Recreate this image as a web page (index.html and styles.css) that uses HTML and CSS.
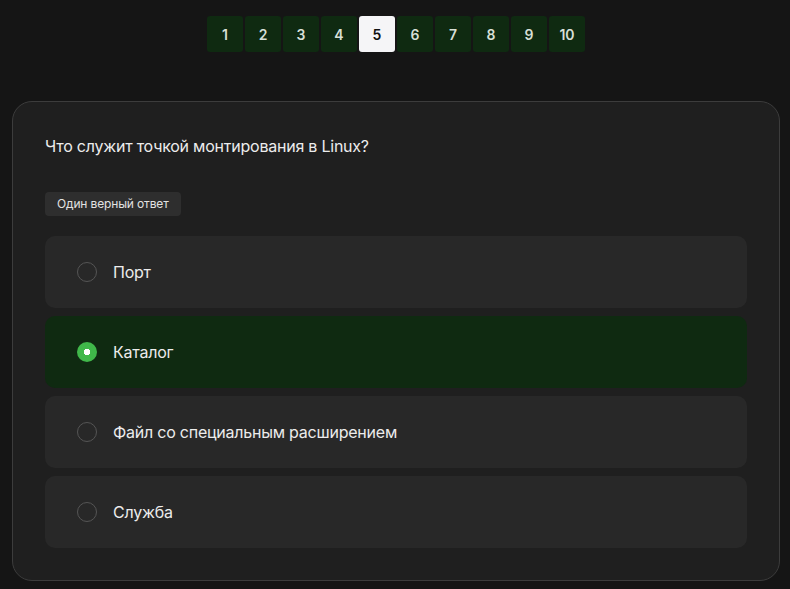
FILE: index.html
```html
<!DOCTYPE html>
<html lang="ru">
<head>
<meta charset="utf-8">
<link rel="stylesheet" href="styles.css">
</head>
<body>
<nav class="pager">
  <button class="page">1</button>
  <button class="page">2</button>
  <button class="page">3</button>
  <button class="page">4</button>
  <button class="page active">5</button>
  <button class="page">6</button>
  <button class="page">7</button>
  <button class="page">8</button>
  <button class="page">9</button>
  <button class="page">10</button>
</nav>
<section class="card">
  <h1 class="question">Что служит точкой монтирования в Linux?</h1>
  <span class="badge">Один верный ответ</span>
  <div class="options">
    <div class="option"><span class="radio"></span><span class="label">Порт</span></div>
    <div class="option selected"><span class="radio"></span><span class="label">Каталог</span></div>
    <div class="option"><span class="radio"></span><span class="label">Файл со специальным расширением</span></div>
    <div class="option"><span class="radio"></span><span class="label">Служба</span></div>
  </div>
</section>
</body>
</html>
```
FILE: styles.css
```css
html, body {
  margin: 0;
  padding: 0;
  background: #151515;
  font-family: Inter, "Noto Sans", sans-serif;
  color: #e6e6e6;
}
body {
  height: 589px;
  overflow: hidden;
}
.pager {
  display: flex;
  justify-content: center;
  gap: 2px;
  padding: 16px 0 0 2px;
}
.page {
  width: 36px;
  height: 36px;
  border: none;
  border-radius: 3px;
  background: #0f2a11;
  color: #d7dfd6;
  font-family: Inter, sans-serif;
  font-weight: 600;
  font-size: 14px;
  padding: 0;
}
.page.active {
  background: #f5f5f7;
  color: #111;
}
.card {
  margin: 49px 10px 0 12px;
  border: 1px solid #3c3c3c;
  border-radius: 20px;
  background: #1f1f1f;
  padding: 32px;
  display: flex;
  flex-direction: column;
  align-items: flex-start;
}
.question {
  margin: 0;
  font-size: 16px;
  font-weight: 400;
  line-height: 24px;
  letter-spacing: -0.23px;
  color: #ececec;
}
.badge {
  margin-top: 34px;
  background: #2e2e2e;
  border-radius: 4px;
  font-size: 12px;
  line-height: 24px;
  letter-spacing: -0.15px;
  padding: 0 12px;
  color: #e2e2e2;
}
.options {
  margin-top: 20px;
  align-self: stretch;
  display: flex;
  flex-direction: column;
  gap: 8px;
}
.option {
  height: 72px;
  background: #282828;
  border-radius: 10px;
  display: flex;
  align-items: center;
  padding-left: 32px;
  gap: 16px;
}
.option.selected {
  background: #0f2a11;
}
.radio {
  width: 18px;
  height: 18px;
  border: 1px solid #555;
  border-radius: 50%;
  box-sizing: content-box;
  flex: none;
}
.option.selected .radio {
  width: 20px;
  height: 20px;
  border: none;
  background: radial-gradient(circle, #ffffff 0 3px, #40b84a 3.5px);
}
.label {
  font-size: 16px;
  letter-spacing: -0.23px;
  color: #ececec;
}
```
